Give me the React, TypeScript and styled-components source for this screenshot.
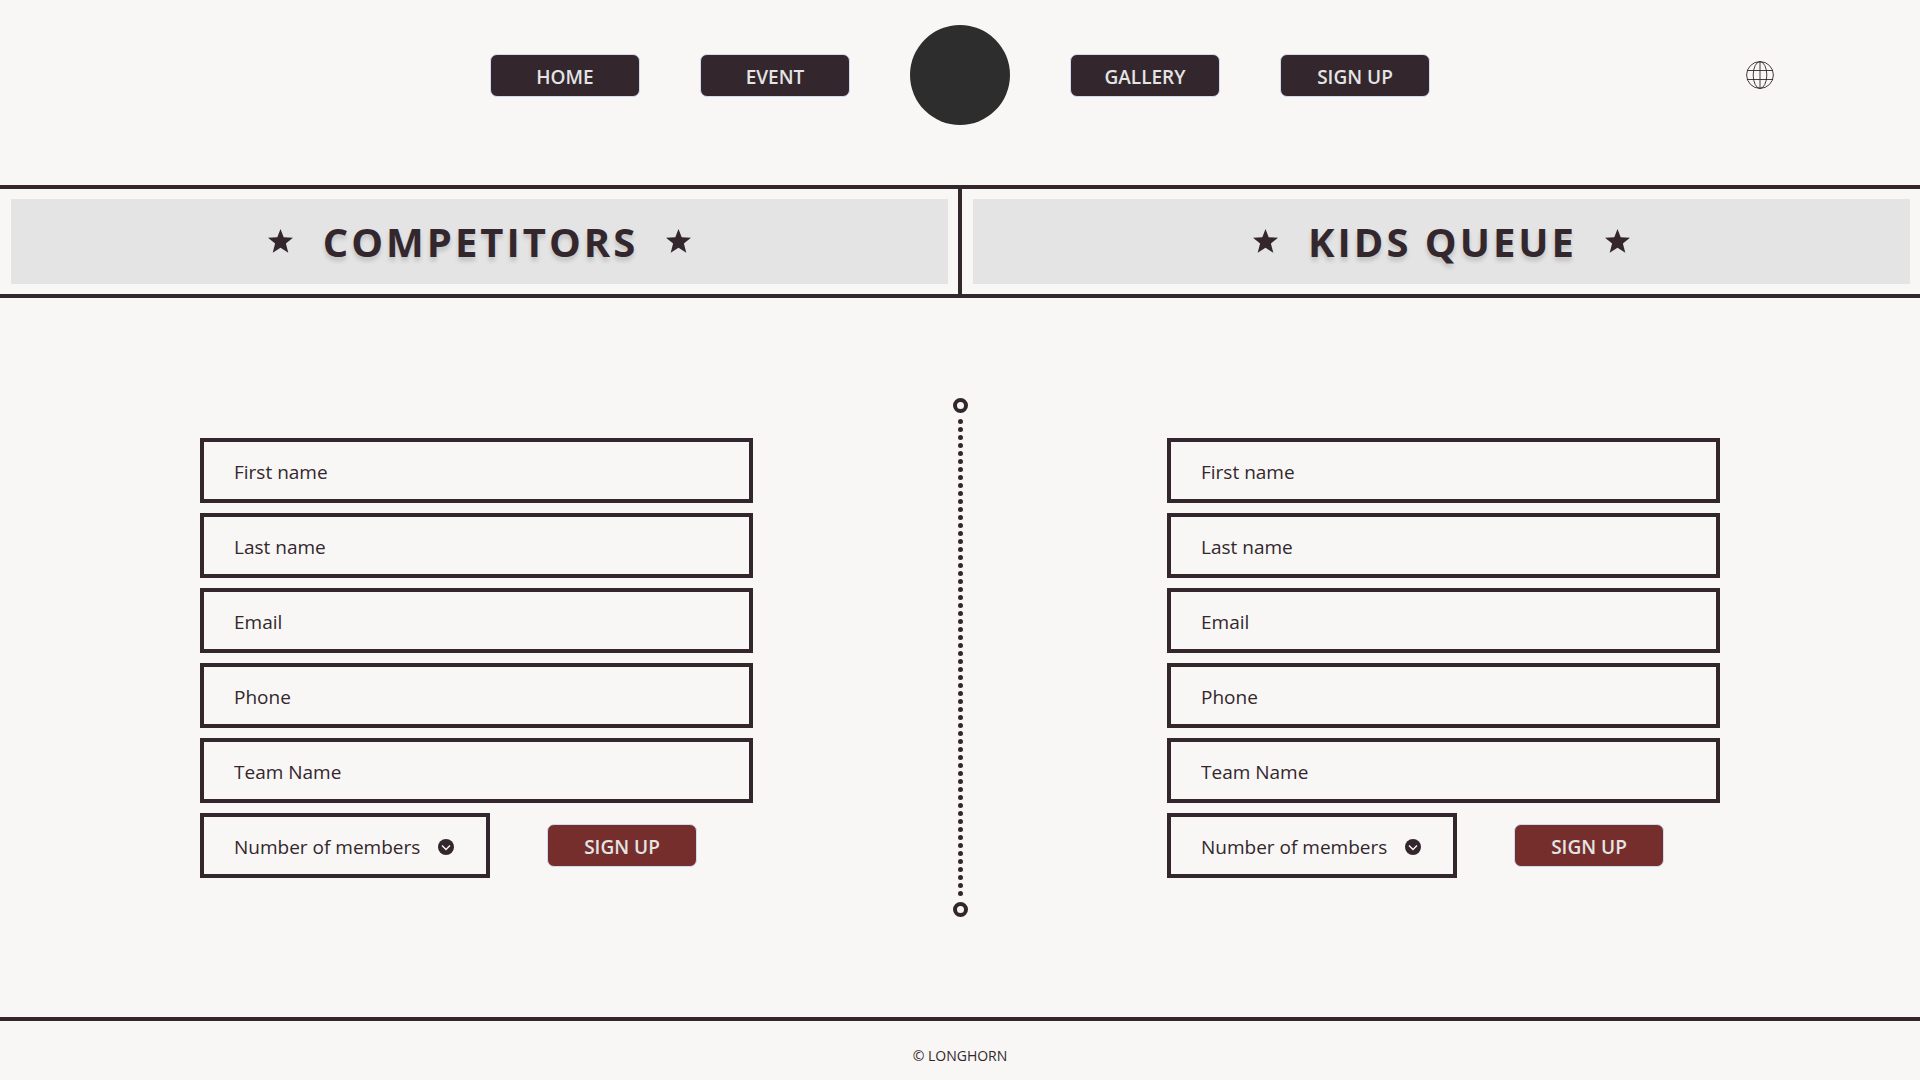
import React from "react";
import styled, { createGlobalStyle } from "styled-components";

const ink = "#33272d";
const paper = "#f8f7f5";
const panel = "#e4e4e4";

const GlobalStyle = createGlobalStyle`
  *, *::before, *::after { box-sizing: border-box; }
  body {
    margin: 0;
    background: ${paper};
    color: ${ink};
    font-family: "Open Sans", "Noto Sans", sans-serif;
  }
`;

const Page = styled.div`
  display: flex;
  flex-direction: column;
  min-height: 100vh;
`;

const Header = styled.header`
  display: grid;
  grid-template-columns: 1fr auto 1fr;
  align-items: center;
  padding: 25px 146px 60px;
`;

const Nav = styled.nav`
  grid-column: 2;
  display: flex;
  align-items: center;
  gap: 60px;
`;

const pill = `
  display: flex;
  align-items: center;
  justify-content: center;
  width: 150px;
  height: 43px;
  padding: 4px 0 0;
  border: 1px solid #cfdcf0;
  border-radius: 7px;
  color: ${panel};
  font-family: inherit;
  font-size: 19px;
  font-weight: 600;
  line-height: 27px;
  text-decoration: none;
  cursor: pointer;
`;

const NavLink = styled.a`
  ${pill}
  background: ${ink};
`;

const SubmitButton = styled.button`
  ${pill}
  background: #752e2c;
`;

const Logo = styled.a`
  width: 100px;
  height: 100px;
  border-radius: 50%;
  background: #2d2d2d;
`;

const LanguageButton = styled.button`
  display: flex;
  justify-self: end;
  padding: 0;
  border: 0;
  background: none;
  color: ${ink};
  cursor: pointer;
`;

const Banner = styled.div`
  display: grid;
  grid-template-columns: 1fr 4px 1fr;
  border: solid ${ink};
  border-width: 4px 0;
`;

const BannerRule = styled.div`
  background: ${ink};
`;

const BannerPanel = styled.div`
  display: flex;
  align-items: center;
  justify-content: center;
  gap: 28px;
  height: 85px;
  margin: 10px 10px 10px 11px;
  background: ${panel};
`;

const BannerTitle = styled.h2`
  margin: 0;
  padding-left: 2px;
  font-size: 40px;
  font-weight: 700;
  line-height: 54px;
  letter-spacing: 3px;
  text-shadow: 0 4px 4px rgba(0, 0, 0, 0.15);
`;

const Main = styled.main`
  flex: 1;
  display: grid;
  grid-template-columns: 1fr 15px 1fr;
  align-items: center;
  padding: 100px 200px;
`;

const Form = styled.form<{ $end?: boolean }>`
  justify-self: ${(p) => (p.$end ? "end" : "start")};
  display: flex;
  flex-direction: column;
  gap: 10px;
  width: 553px;
`;

const control = `
  width: 100%;
  height: 65px;
  padding: 3px 30px 0;
  border: 4px solid ${ink};
  border-radius: 0;
  background: transparent;
  color: ${ink};
  font-family: inherit;
  font-size: 19px;
`;

const Input = styled.input`
  ${control}
  &::placeholder { color: ${ink}; opacity: 1; }
`;

const FormRow = styled.div`
  display: flex;
  align-items: center;
  gap: 57px;
`;

const SelectBox = styled.div`
  position: relative;
  width: 290px;
`;

const Select = styled.select`
  ${control}
  appearance: none;
  cursor: pointer;
`;

const SelectIcon = styled.svg`
  position: absolute;
  top: 50%;
  right: 36px;
  margin-top: -6px;
  pointer-events: none;
`;

const Footer = styled.footer`
  padding: 25px 0 19px;
  border-top: 4px solid ${ink};
  font-size: 14px;
  line-height: 19px;
  text-align: center;
`;

const Star = () => (
  <svg width="25" height="25" viewBox="0 0 25 25" fill={ink} aria-hidden="true">
    <path d="M12.5 0l3.2 8.2 9.3.5-7.1 5.8 2.4 9.3-7.8-5-7.8 5 2.4-9.3L0 8.7l9.3-.5z" />
  </svg>
);

const Globe = () => (
  <svg width="28" height="28" viewBox="0 0 28 28" fill="none" stroke="currentColor" strokeWidth="0.9" aria-hidden="true">
    <circle cx="14" cy="14" r="13.4" />
    <ellipse cx="14" cy="14" rx="6.8" ry="13.4" />
    <path d="M14 .6v26.8M1 9.5h26M1 18.5h26" />
  </svg>
);

const Divider = () => (
  <svg width="15" height="519" viewBox="0 0 15 519" fill="none" stroke={ink} aria-hidden="true">
    <circle cx="7.5" cy="7.5" r="5.5" strokeWidth="4" />
    <path d="M7.5 23.5V496" strokeWidth="5" strokeLinecap="round" strokeDasharray="0 8" />
    <circle cx="7.5" cy="511.5" r="5.5" strokeWidth="4" />
  </svg>
);

const fields = [
  { label: "First name", type: "text" },
  { label: "Last name", type: "text" },
  { label: "Email", type: "email" },
  { label: "Phone", type: "tel" },
  { label: "Team Name", type: "text" },
];

function SignUpForm({ name, end }: { name: string; end?: boolean }) {
  return (
    <Form $end={end} aria-label={name} onSubmit={(e) => e.preventDefault()}>
      {fields.map(({ label, type }) => (
        <Input key={label} type={type} placeholder={label} aria-label={label} />
      ))}
      <FormRow>
        <SelectBox>
          <Select aria-label="Number of members" defaultValue="">
            <option value="">Number of members</option>
            <option>1</option>
            <option>2</option>
            <option>3</option>
            <option>4</option>
          </Select>
          <SelectIcon width="16" height="16" viewBox="0 0 16 16" fill="none" aria-hidden="true">
            <circle cx="8" cy="8" r="8" fill={ink} />
            <path d="M4 6.5l4 4 4-4" stroke={paper} strokeWidth="1.4" />
          </SelectIcon>
        </SelectBox>
        <SubmitButton type="submit">SIGN UP</SubmitButton>
      </FormRow>
    </Form>
  );
}

export default function App() {
  return (
    <Page>
      <GlobalStyle />
      <Header>
        <Nav>
          <NavLink href="#home">HOME</NavLink>
          <NavLink href="#event">EVENT</NavLink>
          <Logo href="#home" aria-label="Longhorn" />
          <NavLink href="#gallery">GALLERY</NavLink>
          <NavLink href="#signup">SIGN UP</NavLink>
        </Nav>
        <LanguageButton type="button" aria-label="Language">
          <Globe />
        </LanguageButton>
      </Header>
      <Banner>
        <BannerPanel>
          <Star />
          <BannerTitle>COMPETITORS</BannerTitle>
          <Star />
        </BannerPanel>
        <BannerRule />
        <BannerPanel>
          <Star />
          <BannerTitle>KIDS QUEUE</BannerTitle>
          <Star />
        </BannerPanel>
      </Banner>
      <Main>
        <SignUpForm name="Competitors" />
        <Divider />
        <SignUpForm name="Kids queue" end />
      </Main>
      <Footer>© LONGHORN</Footer>
    </Page>
  );
}
